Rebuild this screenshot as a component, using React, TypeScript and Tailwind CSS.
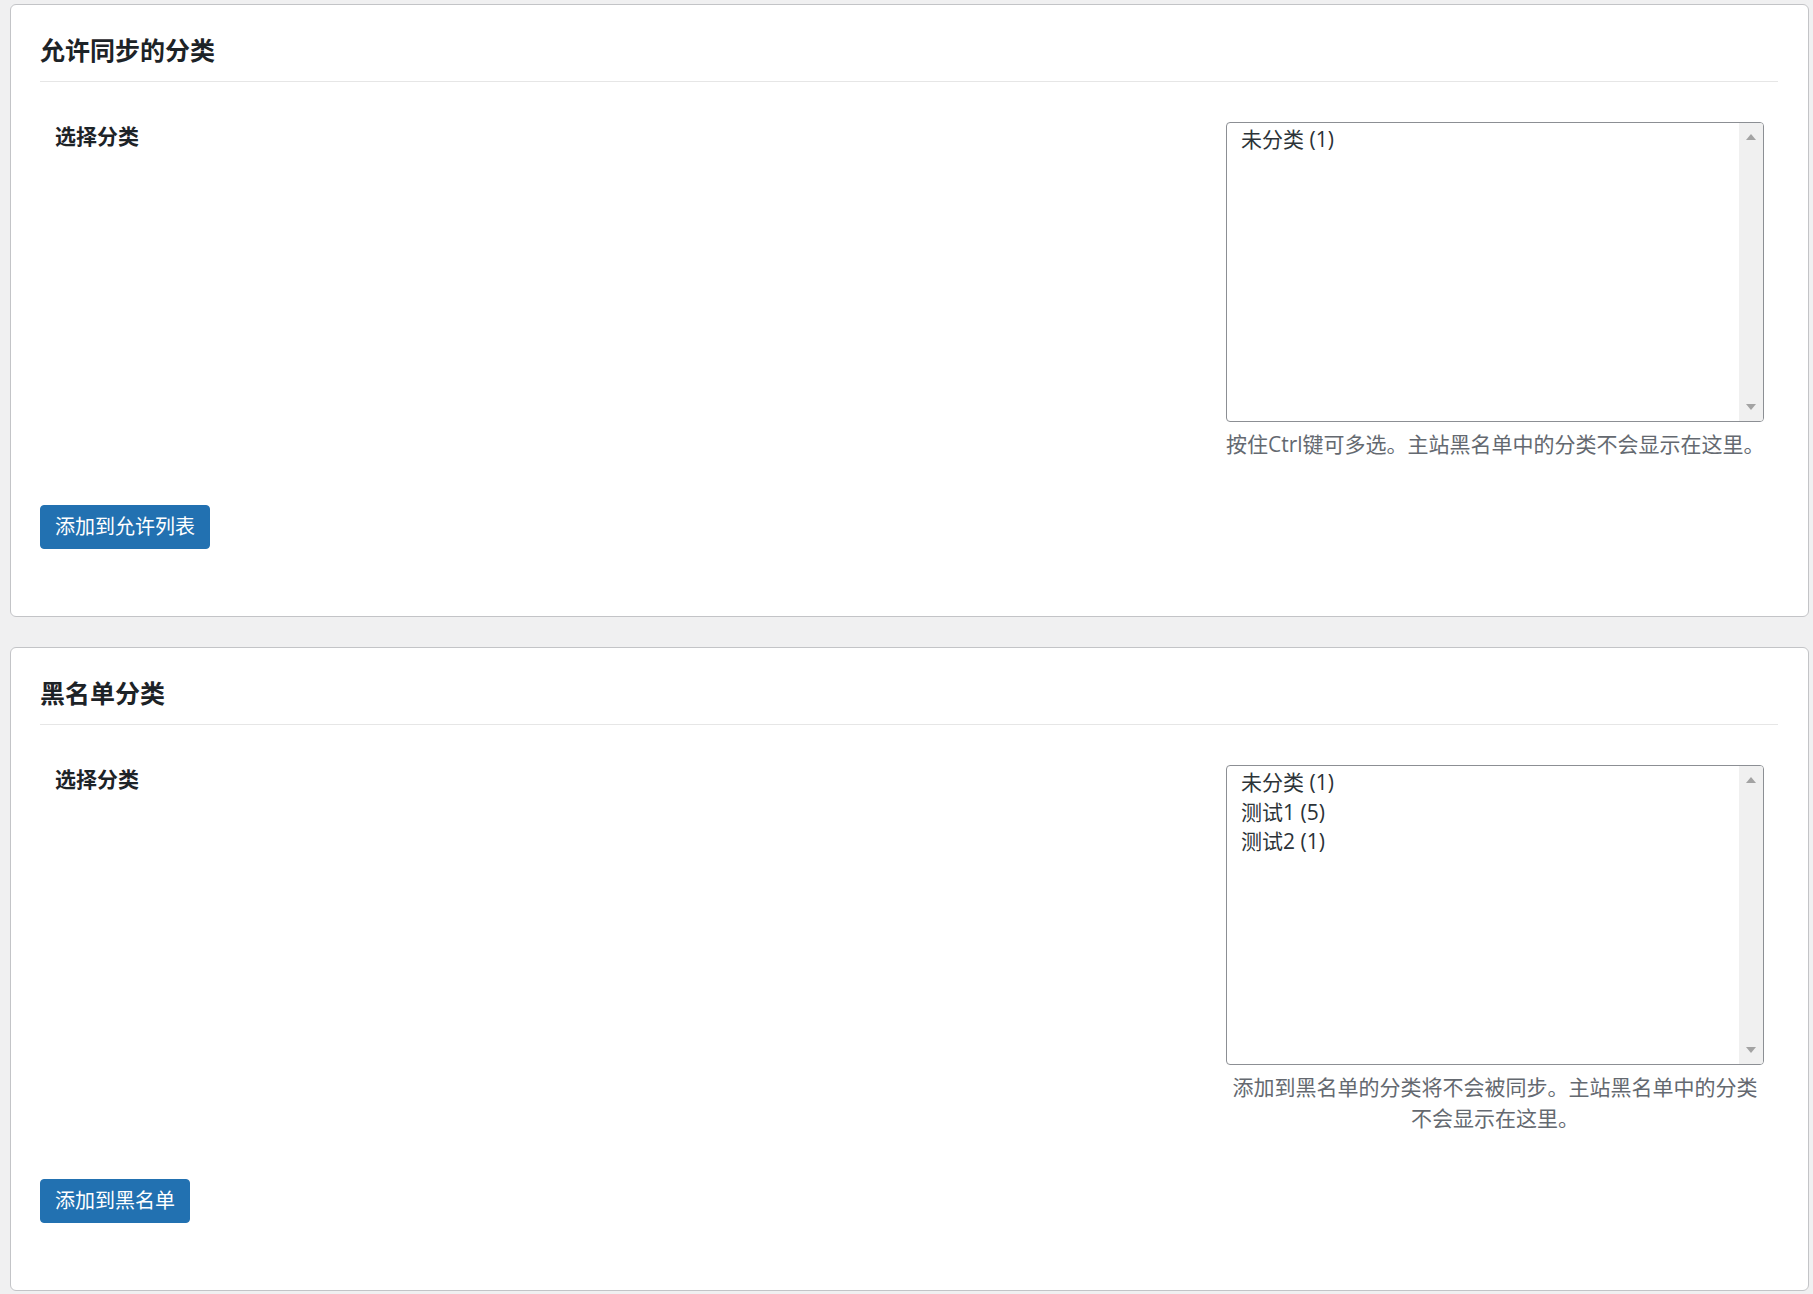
import React from 'react';

interface CategorySection {
  title: string;
  label: string;
  options: string[];
  help: string;
  helpCentered: boolean;
  action: string;
}

const SECTIONS: CategorySection[] = [
  {
    title: '允许同步的分类',
    label: '选择分类',
    options: ['未分类 (1)'],
    help: '按住Ctrl键可多选。主站黑名单中的分类不会显示在这里。',
    helpCentered: false,
    action: '添加到允许列表',
  },
  {
    title: '黑名单分类',
    label: '选择分类',
    options: ['未分类 (1)', '测试1 (5)', '测试2 (1)'],
    help: '添加到黑名单的分类将不会被同步。主站黑名单中的分类不会显示在这里。',
    helpCentered: true,
    action: '添加到黑名单',
  },
];

function ListBox({ options }: { options: string[] }) {
  return (
    <div className="flex h-[300px] w-full overflow-hidden rounded-[4px] border border-[#8c8f94] bg-white">
      <div className="flex-1 pl-[14px] pt-[2px] text-[21px] leading-[29.5px] text-[#2c3338]">
        {options.map((opt) => (
          <div key={opt} className="cursor-default">
            {opt}
          </div>
        ))}
      </div>
      {/* classic scrollbar */}
      <div className="flex w-[24px] flex-col justify-between bg-[#f0f0f0]">
        <div className="flex h-[28px] items-center justify-center">
          <div className="h-0 w-0 border-x-[5px] border-b-[6px] border-x-transparent border-b-[#a3a3a3]" />
        </div>
        <div className="flex h-[28px] items-center justify-center">
          <div className="h-0 w-0 border-x-[5px] border-t-[6px] border-x-transparent border-t-[#a3a3a3]" />
        </div>
      </div>
    </div>
  );
}

function SectionCard({ section }: { section: CategorySection }) {
  return (
    <div className="ml-[10px] mr-[4px] rounded-[6px] border border-[#c3c4c7] bg-white pl-[29px] pr-[30px] pt-[29px] pb-[67px]">
      <h2 className="border-b border-[#e6e6e6] pb-[15px] text-[25px] font-bold leading-[32px] text-[#1d2327]">
        {section.title}
      </h2>

      <div className="flex items-start">
        <div className="mt-[38px] flex-1 pl-[15px] text-[21px] font-bold leading-[32px] text-[#1d2327]">
          {section.label}
        </div>
        <div className="mr-[14px] mt-[40px] w-[538px]">
          <ListBox options={section.options} />
          <p
            className={`mt-[7px] text-[21px] leading-[31px] text-[#646970] ${
              section.helpCentered ? 'text-center' : 'whitespace-nowrap'
            }`}
          >
            {section.help}
          </p>
        </div>
      </div>

      <button className="mt-[45px] flex h-[44px] items-center rounded-[4px] border border-[#2271b1] bg-[#2271b1] px-[14px] text-[20px] text-white">
        {section.action}
      </button>
    </div>
  );
}

export default function App() {
  return (
    <div className="min-h-screen bg-[#f0f0f1] pt-[4px] pb-[4px] font-['Open_Sans','Noto_Sans_CJK_SC',sans-serif]">
      <div className="flex flex-col gap-[30px]">
        {SECTIONS.map((s) => (
          <SectionCard key={s.title} section={s} />
        ))}
      </div>
    </div>
  );
}
